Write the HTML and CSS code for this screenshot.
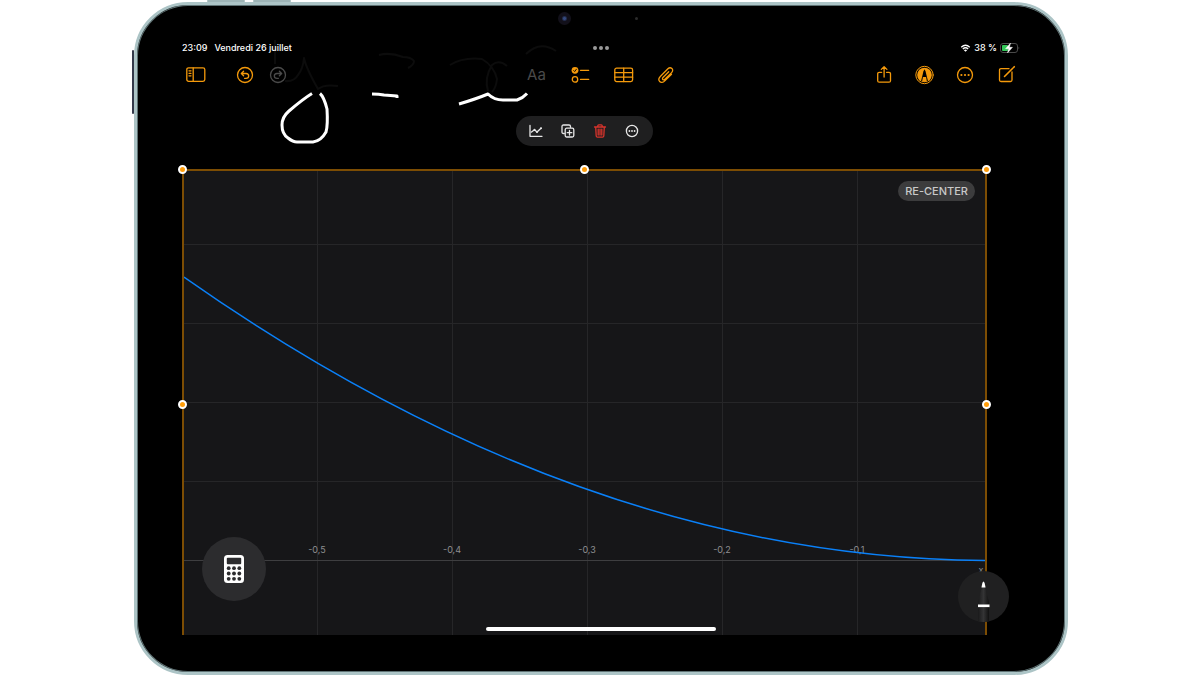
FILE: index.html
```
<!DOCTYPE html>
<html lang="fr">
<head>
<meta charset="utf-8">
<title>Notes</title>
<link rel="stylesheet" href="styles.css">
</head>
<body>
<div class="device">
  <span class="key key-a"></span>
  <span class="key key-b"></span>
  <span class="key key-side"></span>
  <main class="screen">
    <span class="camera"></span>
    <span class="sensor"></span>
    <svg class="ink" viewBox="0 0 300 115" width="300" height="115" aria-hidden="true">
      <g class="ink-faint">
        <path d="M15 0V24M25 41Q34 42 38 35Q43 29 44 18Q46 28 58 49Q64 44 78 46"/>
        <path d="M119 15Q130 12 143 17Q151 17 154 21Q154 25 148 28"/>
        <path d="M190 25Q203 17 222 19Q234 26 237 39Q236 48 232 52M247 26Q239 19 232 25Q224 38 228 51"/>
        <path d="M266 14Q280 0 296 11"/>
      </g>
      <g class="ink-stroke">
        <path d="M52 53.500Q43 59 29 71Q22 77 22 85Q22 94 28 98Q33 102 37 102H53Q61 101 66 92Q68 85 67 69Q64 57 60 53.500"/>
        <path d="M112 54Q119 54 124 55L137 56V58"/>
        <path d="M199 64Q216 59 228 54Q234 60 243 60H257Q263 58 267 53.500"/>
      </g>
    </svg>

    <header class="status">
      <div class="status-left"><span>23:09</span><span>Vendredi 26 juillet</span></div>
      <button class="dots" aria-label="Multitâche"><i></i><i></i><i></i></button>
      <div class="status-right">
        <svg viewBox="0 0 12 9" width="11" height="8" aria-hidden="true"><g fill="none" stroke="#fff" stroke-width="1.500"><path d="M1.200 3.600Q6 -.8 10.800 3.600M3 5.600Q6 2.900 9 5.600"/></g><path d="M4.200 7Q6 5.600 7.800 7L6 8.800Z" fill="#fff"/></svg>
        <span>38 %</span>
        <svg viewBox="0 0 20 10" width="20" height="10" aria-hidden="true"><rect x=".5" y=".5" width="17" height="9" rx="2.500" fill="none" stroke="#4a4a4a"/><path d="M18.600 3.500Q20 5 18.600 6.500Z" fill="#666"/><rect x="2" y="2" width="6" height="6" rx="1" fill="#34c759"/><path d="M10.500 0L5.500 5.700H8.500L7.500 10L12.500 4.300H9.500Z" fill="#fff" stroke="#fff" stroke-width=".4"/></svg>
      </div>
    </header>

    <nav class="toolbar" aria-label="Outils">
      <div class="group group-left">
        <button class="tool" aria-label="Barre latérale"><svg viewBox="0 0 20 20"><rect x=".8" y="2.800" width="18" height="13.600" rx="1.800"/><path d="M7.200 3V16M3 5.800H5M3 8.300H5M3 10.800H5"/></svg></button>
        <button class="tool undo" aria-label="Annuler"><svg viewBox="0 0 20 20"><circle cx="10" cy="10" r="7.500"/><path d="M8.600 6.200L6.300 8.500L8.600 10.800M6.500 8.500H11Q13.700 8.700 13.700 11T11 13.300H9.600"/></svg></button>
        <button class="tool redo" aria-label="Rétablir" disabled><svg viewBox="0 0 20 20"><circle cx="10" cy="10" r="7.500"/><path d="M11.400 6.200L13.700 8.500L11.400 10.800M13.500 8.500H9Q6.300 8.700 6.300 11T9 13.300H10.400"/></svg></button>
      </div>
      <div class="group group-mid">
        <button class="tool format" disabled>Aa</button>
        <button class="tool" aria-label="Liste"><svg viewBox="0 0 20 20"><circle cx="5" cy="5.300" r="3.400" fill="currentColor" stroke="none"/><path d="M3.700 5.500L4.700 6.600L6.400 4.200" stroke="#000" stroke-width=".9"/><circle cx="5" cy="14.400" r="2.700"/><path d="M10.500 5.300H18.700M10.500 14.400H18.700"/></svg></button>
        <button class="tool" aria-label="Tableau"><svg viewBox="0 0 20 20"><rect x="1.800" y="3.200" width="17.800" height="13.400" rx="1.800"/><path d="M10.700 3.200V16.600M1.800 7.700H19.600M1.800 12.200H19.600"/></svg></button>
        <button class="tool" aria-label="Joindre"><svg viewBox="0 0 20 20"><path d="M15.500 9.200L8.800 15.900C7 17.700 4.800 17.700 3.700 16.500S2.700 13 4.500 11.200L11.900 3.800C13.200 2.500 14.900 2.600 15.900 3.500S17 6.200 15.800 7.400L8.900 14.300C8.200 15 7.300 15 6.800 14.500S6.300 13.200 7 12.500L12.700 6.800"/></svg></button>
      </div>
      <div class="group group-right">
        <button class="tool" aria-label="Partager"><svg viewBox="0 0 20 20"><path d="M8.700 7.300H6.200Q4.700 7.300 4.700 8.800V15.700Q4.700 17.200 6.200 17.200H16Q17.500 17.200 17.500 15.700V8.800Q17.500 7.300 16 7.300H13.500M11.100 12V1.800M8.300 4.400L11.100 1.700L13.900 4.400"/></svg></button>
        <button class="tool" aria-label="Annoter"><svg viewBox="0 0 20 20"><circle cx="10.500" cy="10" r="8.700" stroke-width="1"/><circle cx="10.500" cy="10" r="7.300" fill="currentColor" stroke="none"/><path d="M7 16.200L9.400 6.500L10.500 4.200L11.600 6.500L14 16.200" fill="#000" stroke="none"/><path d="M8.900 12H12.100L12.900 16.800H8.100Z" fill="currentColor" stroke="none"/></svg></button>
        <button class="tool" aria-label="Plus"><svg viewBox="0 0 20 20"><circle cx="10" cy="10" r="7.500"/><g fill="currentColor" stroke="none"><circle cx="6.400" cy="10" r="1.100"/><circle cx="10" cy="10" r="1.100"/><circle cx="13.600" cy="10" r="1.100"/></g></svg></button>
        <button class="tool" aria-label="Nouvelle note"><svg viewBox="0 0 20 20"><path d="M13 3.700H5Q3.500 3.700 3.500 5.200V15Q3.500 16.500 5 16.500H14.500Q16 16.500 16 15V7"/><path d="M8.500 11.500L17 3M17.900 2.100L18.300 1.700" stroke-width="1.600"/></svg></button>
      </div>
    </nav>

    <section class="note">
      <div class="pill">
        <button class="act" aria-label="Graphique"><svg viewBox="0 0 14 14"><path d="M1 1.500V12.300H13M2.500 8L5.500 5.700L8 8L12 4.200"/><g fill="currentColor" stroke="none"><circle cx="5.500" cy="5.700" r="1"/><circle cx="8" cy="8" r="1"/><circle cx="12" cy="4.200" r="1"/></g></svg></button>
        <button class="act" aria-label="Dupliquer"><svg viewBox="0 0 14 14"><path d="M3.300 9.500H2.500Q1 9.500 1 8V2.500Q1 1 2.500 1H8Q9.500 1 9.500 2.500V3.300"/><rect x="4.200" y="4.200" width="8.600" height="8.800" rx="1.500"/><path d="M8.500 6.400V11M6.200 8.700H10.800"/></svg></button>
        <button class="act danger" aria-label="Supprimer"><svg viewBox="0 0 14 14"><path d="M1.500 3H12.500M4.800 3V1.800Q4.800 .8 5.800 .8H8.200Q9.200 .8 9.200 1.800V3M2.700 3L3.200 12Q3.300 13.200 4.500 13.200H9.500Q10.700 13.200 10.800 12L11.300 3M5.200 5.200V11M7 5.200V11M8.800 5.200V11"/></svg></button>
        <button class="act" aria-label="Options"><svg viewBox="0 0 14 14"><circle cx="7" cy="7" r="5.600"/><g fill="currentColor" stroke="none"><circle cx="4.400" cy="7" r=".9"/><circle cx="7" cy="7" r=".9"/><circle cx="9.600" cy="7" r=".9"/></g></svg></button>
      </div>

      <div class="graph">
        <svg class="plot" viewBox="0 0 801 464" role="img" aria-label="Courbe">
          <path class="grid" d="M133.500 0V464M268.500 0V464M403.500 0V464M538.500 0V464M673.500 0V464M0 73.500H801M0 152.500H801M0 231.500H801M0 310.500H801"/>
          <path class="axis" d="M0 389.500H801"/>
          <g class="labels">
            <text x="133" y="382">-0,5</text>
            <text x="268" y="382">-0,4</text>
            <text x="403" y="382">-0,3</text>
            <text x="538" y="382">-0,2</text>
            <text x="673" y="382">-0,1</text>
            <text x="797" y="402">x</text>
          </g>
          <path class="curve" d="M0 106Q400 387 801 389.500"/>
        </svg>
        <button class="recenter">RE-CENTER</button>
        <i class="handle tl"></i><i class="handle tc"></i><i class="handle tr"></i>
        <i class="handle ml"></i><i class="handle mr"></i>
        <button class="calc" aria-label="Calculatrice"><svg viewBox="0 0 20 28" width="20" height="28"><rect width="20" height="28" rx="3.500" fill="#fff"/><g fill="#2c2c2e"><rect x="2.800" y="2.800" width="14.400" height="6.400" rx="1"/><circle cx="4.700" cy="13.200" r="1.900"/><circle cx="10" cy="13.200" r="1.900"/><circle cx="15.300" cy="13.200" r="1.900"/><circle cx="4.700" cy="18.500" r="1.900"/><circle cx="10" cy="18.500" r="1.900"/><circle cx="15.300" cy="18.500" r="1.900"/><circle cx="4.700" cy="23.800" r="1.900"/><circle cx="10" cy="23.800" r="1.900"/><circle cx="15.300" cy="23.800" r="1.900"/></g></svg></button>
        <button class="pen" aria-label="Stylet"><svg viewBox="0 0 51 51" width="51" height="51"><defs><linearGradient id="barrel"><stop offset="0" stop-color="#1a1a1b"/><stop offset=".5" stop-color="#343435"/><stop offset="1" stop-color="#111"/></linearGradient></defs><path d="M20 51V31L24 16H27L31 31V51Z" fill="url(#barrel)"/><path d="M23.500 16.500Q24.300 10.500 25.500 10.500T27.500 16.500Z" fill="#fff"/><rect x="20" y="33.500" width="11.500" height="2.600" fill="#fff"/></svg></button>
      </div>
    </section>
    <span class="home"></span>
  </main>
</div>
</body>
</html>
```
FILE: styles.css
```
* { box-sizing: border-box; }

body {
  margin: 0;
  min-height: 100vh;
  display: flex;
  padding: 2px 132px 0 134px;
  background: #fff;
  color: #fff;
  font-family: Inter, "Liberation Sans", sans-serif;
}

button {
  margin: 0;
  padding: 0;
  border: 0;
  background: none;
  color: inherit;
  font: inherit;
}

svg { display: block; }

.device {
  position: relative;
  flex: 1;
  border: 3px solid #acc4c6;
  border-radius: 54px;
  background: #000;
  box-shadow: inset 0 0 0 1px #5f7375;
}

.key {
  position: absolute;
  background: #9db4b6;
  border-radius: 2px;
}
.key-a, .key-b { top: -5px; width: 38px; height: 2px; }
.key-a { left: 70px; }
.key-b { left: 116px; }
.key-side { left: -5px; top: 45px; width: 2px; height: 64px; background: #33394a; }

.screen {
  position: relative;
  padding: 35px 1px 37px;
}

.camera, .sensor {
  position: absolute;
  border-radius: 50%;
}
.camera {
  left: calc(50% - 43px);
  top: 7px;
  width: 13px;
  height: 13px;
  background: radial-gradient(circle, #34497f 0 1px, #12101a 3px);
}
.sensor {
  left: calc(50% + 34px);
  top: 12px;
  width: 3px;
  height: 3px;
  background: #2b2b2b;
}

.ink {
  position: absolute;
  left: 123px;
  top: 35px;
  fill: none;
  stroke-linejoin: round;
}
.ink-faint { stroke: #0c0c0c; stroke-width: 2; }
.ink-stroke { stroke: #fff; stroke-width: 3; }

.status, .toolbar {
  position: relative;
  display: grid;
  grid-template-columns: 1fr auto 1fr;
  align-items: center;
}
.status {
  height: 16px;
  padding: 0 44px;
  font-size: 9px;
  line-height: 16px;
  font-weight: 500;
}
.status-left, .status-right, .dots, .group { display: flex; align-items: center; }
.status-left { gap: 7px; }
.status-right { justify-content: flex-end; gap: 3px; }
.dots { gap: 2px; }
.dots i { width: 4px; height: 4px; border-radius: 50%; background: #999; }

.toolbar {
  margin-top: 9px;
  padding: 0 48px;
}
.group-mid { gap: 23px; }
.group-right { gap: 21px; justify-content: flex-end; }
.undo { margin-left: 29px; }
.redo { margin-left: 13px; }

.tool {
  width: 20px;
  height: 20px;
  color: #f59a0b;
  line-height: 20px;
}
.tool:disabled { color: #4a4a4a; }
.tool svg, .act svg {
  width: 100%;
  height: 100%;
  fill: none;
  stroke: currentColor;
  stroke-width: 1.3;
  stroke-linecap: round;
  stroke-linejoin: round;
  overflow: visible;
}
.format { font-size: 15px; }

.note { padding: 31px 77px 0 44px; }

.pill {
  position: relative;
  display: flex;
  align-items: center;
  justify-content: center;
  gap: 18px;
  width: fit-content;
  height: 30px;
  margin: 0 auto;
  padding: 0 14px 0 13px;
  border-radius: 15px;
  background: #1f1f20;
}
.act { width: 14px; height: 14px; color: #e8e8e8; }
.danger { color: #d9342c; }

.graph {
  position: relative;
  margin-top: 23px;
  border: 2px solid #7d4d03;
  border-bottom: 0;
  background: #161618;
}
.plot { width: 100%; height: auto; }
.grid { stroke: #262628; fill: none; }
.axis { stroke: #3e3e40; }
.labels { fill: #8e8e90; font-size: 9px; text-anchor: middle; }
.curve { fill: none; stroke: #0a80f8; stroke-width: 1.5; }

.recenter {
  position: absolute;
  top: 10px;
  right: 10px;
  height: 20px;
  padding: 0 7px;
  border-radius: 10px;
  background: #3c3c3d;
  color: #c9c9c9;
  font-size: 11px;
  line-height: 20px;
  font-weight: 500;
}

.handle {
  position: absolute;
  width: 9px;
  height: 9px;
  border: 2px solid #fff;
  border-radius: 50%;
  background: #ff9d0a;
}
.tl, .tc, .tr { top: -6px; }
.tl, .ml { left: -6px; }
.tr, .mr { right: -6px; }
.tc { left: calc(50% - 5px); }
.ml, .mr { top: calc(50% - 3px); }

.calc, .pen {
  position: absolute;
  display: flex;
  align-items: center;
  justify-content: center;
  border-radius: 50%;
  overflow: hidden;
}
.calc {
  left: 18px;
  bottom: 34px;
  width: 64px;
  height: 64px;
  background: #2c2c2e;
}
.pen {
  right: -24px;
  bottom: 13px;
  width: 51px;
  height: 51px;
  background: #202021;
}

.home {
  position: absolute;
  left: 50%;
  bottom: 41px;
  width: 230px;
  height: 4px;
  margin-left: -115px;
  border-radius: 2px;
  background: #fff;
}
```
